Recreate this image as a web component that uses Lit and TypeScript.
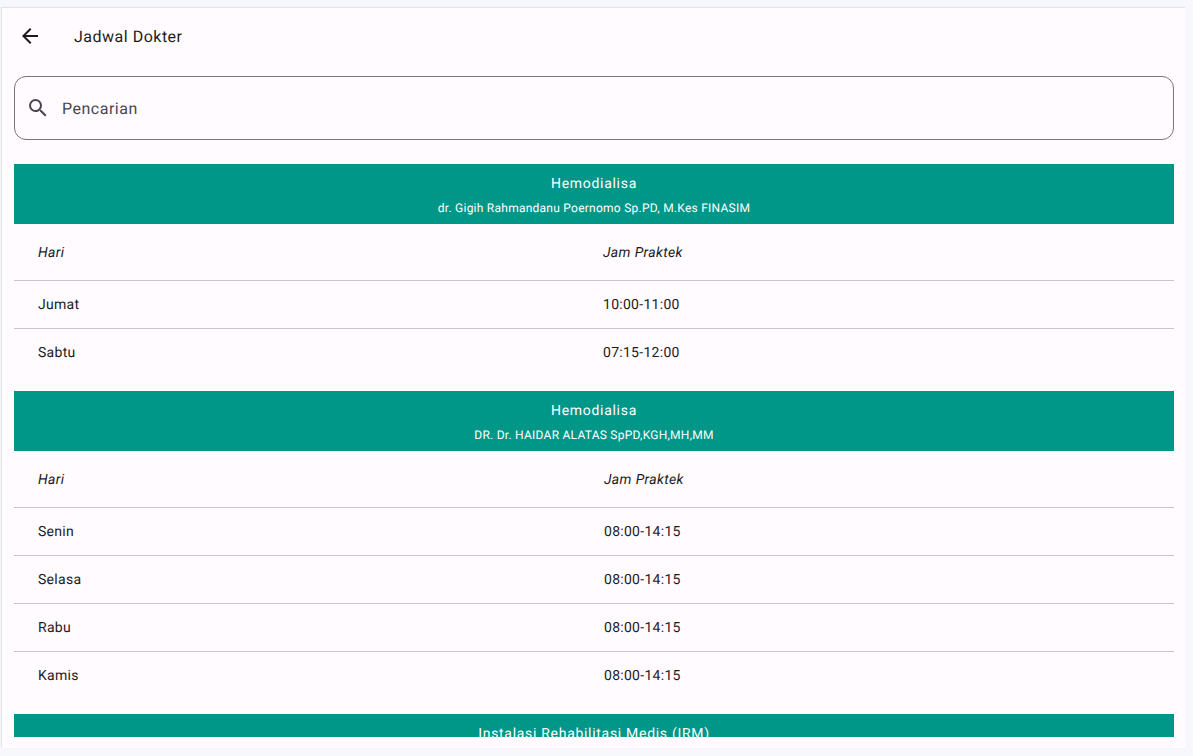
import { LitElement, html, css } from "lit";
import { customElement } from "lit/decorators.js";

interface Section {
  title: string;
  doctor: string;
  col: string;
  rows: [string, string][];
}

const SECTIONS: Section[] = [
  {
    title: "Hemodialisa",
    doctor: "dr. Gigih Rahmandanu Poernomo Sp.PD, M.Kes FINASIM",
    col: "col-a",
    rows: [
      ["Jumat", "10:00-11:00"],
      ["Sabtu", "07:15-12:00"],
    ],
  },
  {
    title: "Hemodialisa",
    doctor: "DR. Dr. HAIDAR ALATAS SpPD,KGH,MH,MM",
    col: "col-b",
    rows: [
      ["Senin", "08:00-14:15"],
      ["Selasa", "08:00-14:15"],
      ["Rabu", "08:00-14:15"],
      ["Kamis", "08:00-14:15"],
    ],
  },
  {
    title: "Instalasi Rehabilitasi Medis (IRM)",
    doctor: "",
    col: "col-a",
    rows: [],
  },
];

@customElement("app-root")
export class AppRoot extends LitElement {
  static styles = css`
    :host {
      display: block;
      height: 756px;
      background: #f6f8fb;
      font-family: Roboto, "Liberation Sans", sans-serif;
      color: #1c1b1f;
      overflow: hidden;
      text-rendering: geometricPrecision;
    }
    .page {
      height: 756px;
      box-sizing: border-box;
      padding: 8px 7px 8px 2px;
    }
    .card {
      height: 740px;
      background: #fffbfe;
      box-shadow: -1px -1px 1px rgba(0, 0, 0, 0.08), 1px 1px 2px rgba(0, 0, 0, 0.015);
      display: flex;
      flex-direction: column;
    }
    .appbar {
      height: 56px;
      flex: none;
      display: flex;
      align-items: center;
      padding-left: 16px;
      box-sizing: border-box;
    }
    .back {
      width: 24px;
      height: 24px;
      display: block;
      fill: #1c1b1f;
    }
    .title {
      margin-left: 32px;
      font-size: 16px;
      line-height: 24px;
      letter-spacing: 0.5px;
      padding-top: 1px;
    }
    .search-wrap {
      flex: none;
      padding: 12px 12px 24px 12px;
    }
    .search {
      height: 64px;
      box-sizing: border-box;
      border: 1px solid #79747e;
      border-radius: 12px;
      display: flex;
      align-items: center;
      padding-left: 11px;
    }
    .search svg {
      width: 24px;
      height: 24px;
      fill: #49454f;
      flex: none;
    }
    .search span {
      margin-left: 12px;
      font-size: 16px;
      letter-spacing: 0.5px;
      color: #49454f;
    }
    .list {
      flex: 1;
      min-height: 0;
      overflow: hidden;
      margin: 0 12px 11px 12px;
    }
    .section {
      margin-bottom: 15px;
    }
    .head {
      height: 60px;
      background: #009688;
      color: #fff;
      text-align: center;
      box-sizing: border-box;
      padding-top: 10px;
    }
    .head .name {
      font-size: 14px;
      line-height: 20px;
      letter-spacing: 0.7px;
    }
    .head .doc {
      margin-top: 6px;
      font-size: 12px;
      line-height: 16px;
      letter-spacing: 0.25px;
    }
    .row {
      display: grid;
      align-items: center;
      height: 48px;
      padding: 0 0 0 24px;
      box-sizing: border-box;
      border-top: 1px solid #cac4d0;
      font-size: 14px;
      letter-spacing: 0.28px;
    }
    .row.th {
      height: 56px;
      padding-top: 2px;
      border-top: none;
      font-style: italic;
      letter-spacing: 0.35px;
    }
    .col-a {
      grid-template-columns: 565px 1fr;
    }
    .col-b {
      grid-template-columns: 566px 1fr;
    }
  `;

  render() {
    return html`
      <div class="page">
        <div class="card">
          <div class="appbar">
            <svg class="back" viewBox="0 0 24 24">
              <path d="M20 11H7.83l5.59-5.59L12 4l-8 8 8 8 1.41-1.41L7.83 13H20v-2z" />
            </svg>
            <span class="title">Jadwal Dokter</span>
          </div>
          <div class="search-wrap">
            <div class="search">
              <svg viewBox="0 0 24 24">
                <path
                  d="M15.5 14h-.79l-.28-.27A6.471 6.471 0 0 0 16 9.5 6.5 6.5 0 1 0 9.5 16c1.61 0 3.09-.59 4.23-1.57l.27.28v.79l5 4.99L20.49 19l-4.99-5zm-6 0C7.01 14 5 11.99 5 9.5S7.01 5 9.5 5 14 7.01 14 9.5 11.99 14 9.5 14z"
                />
              </svg>
              <span>Pencarian</span>
            </div>
          </div>
          <div class="list">
            ${SECTIONS.map(
              (s) => html`
                <div class="section">
                  <div class="head">
                    <div class="name">${s.title}</div>
                    <div class="doc">${s.doctor}</div>
                  </div>
                  ${s.rows.length
                    ? html`<div class="row th ${s.col}"><span>Hari</span><span>Jam Praktek</span></div>`
                    : ""}
                  ${s.rows.map(
                    (r) => html`<div class="row ${s.col}"><span>${r[0]}</span><span>${r[1]}</span></div>`
                  )}
                </div>
              `
            )}
          </div>
        </div>
      </div>
    `;
  }
}
